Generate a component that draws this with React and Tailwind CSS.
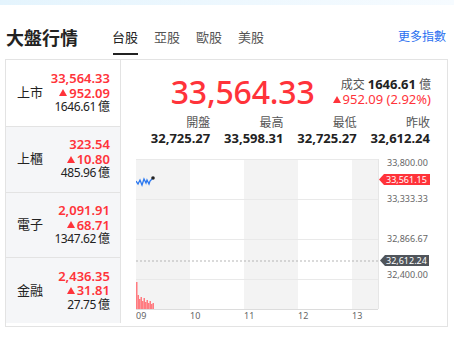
const RED = 'text-[#ff333a]'

function Up({ className = '' }) {
  return (
    <svg width="8" height="7" viewBox="0 0 8 7" className={className}>
      <path d="M4 0 L8 7 L0 7 Z" fill="#ff333a" />
    </svg>
  )
}

const rows = [
  { name: '上市', price: '33,564.33', change: '952.09', vol: '1646.61', active: true },
  { name: '上櫃', price: '323.54', change: '10.80', vol: '485.96' },
  { name: '電子', price: '2,091.91', change: '68.71', vol: '1347.62' },
  { name: '金融', price: '2,436.35', change: '31.81', vol: '27.75' },
]

const stats = [
  ['開盤', '32,725.27'],
  ['最高', '33,598.31'],
  ['最低', '32,725.27'],
  ['昨收', '32,612.24'],
]

function Chart() {
  const line = '0,24 2,27 4,23 6,28 8,22 10,26 11,23 13,27 14,24 16,22'
  const bars = [125, 138, 142, 140, 144, 141, 145, 143, 146, 144, 147, 146]
  return (
    <svg width="296" height="165" viewBox="0 0 296 165" className="block">
      <rect x="0" y="2" width="54" height="150" fill="#f3f3f3" />
      <rect x="108" y="2" width="54" height="150" fill="#f3f3f3" />
      <rect x="216" y="2" width="26" height="150" fill="#f3f3f3" />
      {[2, 42, 82, 122].map((y) => (
        <line key={y} x1="0" x2="242" y1={y + 0.5} y2={y + 0.5} stroke="#e9e9e9" />
      ))}
      <line x1="0" x2="242" y1="152.5" y2="152.5" stroke="#dcdcdc" />
      <line x1="242.5" x2="242.5" y1="2" y2="152" stroke="#e6e6e6" />
      <line x1="0" x2="244" y1="104" y2="104" stroke="#b5b5b5" strokeDasharray="2 2" />
      {bars.map((h, i) => (
        <rect key={i} x={i * 1.5} y={h} width="1.5" height={152 - h} fill="#ff7b80" />
      ))}
      <polyline points={line} fill="none" stroke="#2b78f0" strokeWidth="1.3" />
      <circle cx="17" cy="21" r="1.8" fill="#222" />
      {[['09', 0], ['10', 54], ['11', 108], ['12', 162], ['13', 216]].map(([t, x]) => (
        <text key={t} x={x} y="162" fontSize="9" fill="#666" fontFamily="Noto Sans, sans-serif">{t}</text>
      ))}
      {[['33,800.00', 9], ['33,333.33', 45], ['32,866.67', 85], ['32,400.00', 121]].map(([t, y]) => (
        <text key={t} x="251" y={y} fontSize="9" fill="#666" fontFamily="Noto Sans, sans-serif">{t}</text>
      ))}
      <path d="M243 22.5 L248 17 L294 17 L294 28 L248 28 Z" fill="#ff333a" />
      <text x="250" y="26" fontSize="9" fill="#fff" fontFamily="Noto Sans, sans-serif">33,561.15</text>
      <path d="M244 103.5 L249 98 L293 98 L293 109 L249 109 Z" fill="#50555b" />
      <text x="250" y="107" fontSize="9" fill="#fff" fontFamily="Noto Sans, sans-serif">32,612.24</text>
    </svg>
  )
}

export default function App() {
  return (
    <div className="w-[454px] h-[338px] bg-white overflow-hidden font-['Noto_Sans','Noto_Sans_CJK_TC',sans-serif] text-[#222]">
      <div className="h-[5px] bg-gradient-to-r from-[#e4f4fd] to-[#f6fbff]" />

      {/* Header */}
      <div className="h-[54px] flex items-start px-[6px]">
        <h1 className="mt-[21px] text-[18px] font-bold leading-[24px]">大盤行情</h1>
        <nav className="flex ml-[34px] mt-[23px] gap-[16px] text-[13px] leading-[18px]">
          <div className="flex flex-col items-center">
            <span className="text-[#222]">台股</span>
            <div className="mt-[7px] h-[2px] w-[25px] bg-[#222]" />
          </div>
          <span className="text-[#555]">亞股</span>
          <span className="text-[#555]">歐股</span>
          <span className="text-[#555]">美股</span>
        </nav>
        <a className="ml-auto mt-[23px] text-[12px] leading-[18px] text-[#2a6ff0] pr-[2px]">更多指數</a>
      </div>

      {/* Panel */}
      <div className="ml-[5px] w-[443px] h-[268px] border border-[#e3e3e3] flex">
        <div className="w-[115px] flex flex-col border-r border-[#e3e3e3] bg-[#f5f6f8] mb-[3px]">
          {rows.map((r, i) => (
            <div
              key={r.name}
              className={`h-[66px] flex items-center justify-between pl-[11px] pr-[10px] ${i > 0 ? 'border-t border-[#e3e3e3]' : ''} ${r.active ? 'bg-white' : ''}`}
            >
              <span className="text-[13px]">{r.name}</span>
              <div className="flex flex-col items-end text-[13px] leading-[14.5px]">
                <span className={`${RED} font-semibold`}>{r.price}</span>
                <span className={`${RED} font-semibold flex items-center gap-[2px]`}>
                  <Up />
                  {r.change}
                </span>
                <span className="text-[#222] text-[12px] tracking-[-0.4px]">
                  {r.vol}
                  <span className="ml-[2px] tracking-normal">億</span>
                </span>
              </div>
            </div>
          ))}
        </div>

        <div className="flex-1 flex flex-col">
          <div className="flex items-center justify-end pr-[16px] pt-[12px] h-[52px]">
            <span className={`${RED} text-[32px] leading-[34px] font-medium mr-[18px] tracking-[-0.2px]`}>33,564.33</span>
            <div className="flex flex-col items-end leading-[15px]">
              <span className="text-[12px] text-[#555] flex items-baseline">
                成交
                <span className="font-bold text-[13px] text-[#222] ml-[3px] mr-[3px]">1646.61</span>
                億
              </span>
              <span className={`${RED} text-[13px] flex items-center gap-[2px]`}>
                <Up />
                952.09 (2.92%)
              </span>
            </div>
          </div>
          <div className="grid grid-cols-4 pl-[16px] pr-[17px] mt-[3px]">
            {stats.map(([l, v]) => (
              <div key={l} className="flex flex-col items-end">
                <span className="text-[12px] leading-[15px] text-[#555]">{l}</span>
                <span className="text-[13px] leading-[17px] font-bold text-[#222]">{v}</span>
              </div>
            ))}
          </div>
          <div className="ml-[15px] mt-[10px]">
            <Chart />
          </div>
        </div>
      </div>
    </div>
  )
}
